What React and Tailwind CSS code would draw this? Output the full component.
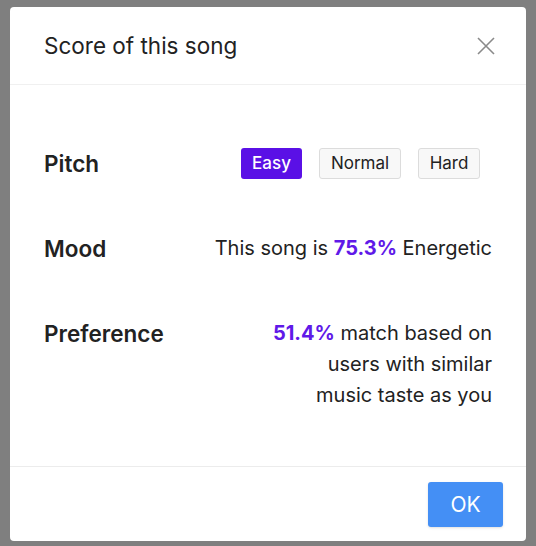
export default function App() {
    return (
        <div className="w-[536px] h-[546px] bg-[#7f7f7f] pt-[7px] pl-[10px]" style={{ fontFamily: "Inter, 'Noto Sans', sans-serif" }}>
            <div className="w-[516px] h-[534px] bg-white rounded-[4px] flex flex-col text-[#222]">
                {/* Header */}
                <div className="h-[78px] flex items-center justify-between pl-[34px] pr-[30px] border-b border-[#f0f0f0] shrink-0">
                    <h2 className="text-[22.5px] font-normal">Score of this song</h2>
                    <button className="w-[20px] h-[20px] flex items-center justify-center text-[#8a8a8a]">
                        <svg width="18" height="18" viewBox="0 0 18 18" fill="none" stroke="currentColor" strokeWidth="1.6">
                            <path d="M1 1 L17 17 M17 1 L1 17" />
                        </svg>
                    </button>
                </div>

                {/* Body */}
                <div className="flex-1 pt-[63px] pl-[34px] pr-[34px] flex flex-col gap-[54px]">
                    <div className="flex items-center justify-between h-[31px]">
                        <span className="text-[22.5px] font-semibold leading-[31px]">Pitch</span>
                        <div className="flex gap-[17px] pr-[12px]">
                            <button className="h-[31px] w-[61px] bg-[#5a10e6] text-white text-[17px] font-medium rounded-[3px]">Easy</button>
                            <button className="h-[31px] w-[82px] bg-[#f8f8f8] border border-[#dcdcdc] text-[17px] rounded-[3px]">Normal</button>
                            <button className="h-[31px] w-[62px] bg-[#f8f8f8] border border-[#dcdcdc] text-[17px] rounded-[3px]">Hard</button>
                        </div>
                    </div>

                    <div className="flex items-center justify-between h-[31px]">
                        <span className="text-[22.5px] font-semibold leading-[31px]">Mood</span>
                        <span className="text-[20px] leading-[31px]">
                            This song is <span className="font-bold text-[#6019e8]">75.3%</span> Energetic
                        </span>
                    </div>

                    <div className="flex items-start justify-between">
                        <span className="text-[22.5px] font-semibold leading-[31px]">Preference</span>
                        <p className="text-[20px] leading-[31px] text-right">
                            <span className="font-bold text-[#6019e8]">51.4%</span> match based on<br />
                            users with similar<br />
                            music taste as you
                        </p>
                    </div>
                </div>

                {/* Footer */}
                <div className="h-[75px] border-t border-[#ececec] flex items-start justify-end pt-[15px] pr-[23px] shrink-0">
                    <button className="w-[75px] h-[45px] bg-[#448ff5] text-white text-[21px] rounded-[3px] shadow-sm">OK</button>
                </div>
            </div>
        </div>
    );
}
